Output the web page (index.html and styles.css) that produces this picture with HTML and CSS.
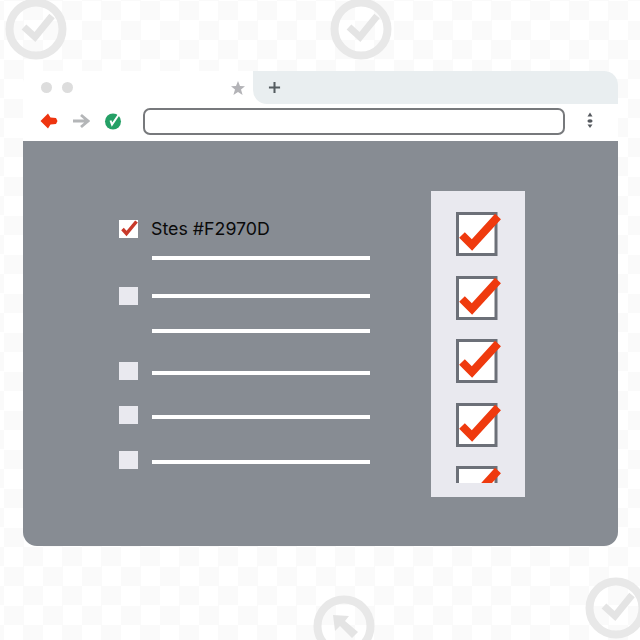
FILE: index.html
```html
<!DOCTYPE html>
<html lang="en">
<head>
<meta charset="utf-8">
<title>Checklist</title>
<link rel="stylesheet" href="styles.css">
</head>
<body>
<div class="page">
  <svg class="mark mark-a" viewBox="0 0 62 62"><circle cx="31" cy="31" r="26.5"/><polyline points="19,29 30,39 47,18"/></svg>
  <svg class="mark mark-b" viewBox="0 0 62 62"><circle cx="31" cy="31" r="26.5"/><polyline points="19,29 30,39 47,18"/></svg>
  <svg class="mark mark-c" viewBox="0 0 62 62"><circle cx="31" cy="31" r="26.5"/><path class="solid" d="M20 20 L36 21 L32 26 L45 37 L39 43 L27 31 L22 36 Z"/></svg>
  <svg class="mark mark-d" viewBox="0 0 62 62"><circle cx="31" cy="31" r="26.5"/><polyline points="19,29 30,39 47,18"/></svg>

  <div class="window">
    <div class="tabbar">
      <div class="tab">
        <span class="dot"></span>
        <span class="dot"></span>
        <svg class="star" viewBox="0 0 16 16"><path d="M8 1 L10 6 L15 6.2 L11 9.5 L12.6 15 L8 12 L3.4 15 L5 9.5 L1 6.2 L6 6 Z"/></svg>
      </div>
      <div class="tabrest">
        <svg class="plus" viewBox="0 0 14 14"><path d="M7 1 V13 M1 7 H13"/></svg>
      </div>
    </div>
    <div class="toolbar">
      <svg class="back" viewBox="0 0 18 16"><path d="M0.5 8 L8 0.5 L10.5 4.5 L16 5 L17.5 8 L16 11 L10.5 11.5 L8 15.5 Z"/></svg>
      <svg class="forward" viewBox="0 0 18 16"><path d="M1 8 H15 M9 2 L16 8 L9 14"/></svg>
      <svg class="site" viewBox="0 0 18 18"><circle cx="9" cy="9.5" r="8"/><path class="tick" d="M6.5 8.5 L8 12.5 L15.5 1.5"/></svg>
      <div class="address"></div>
      <svg class="kebab" viewBox="0 0 6 18"><path d="M3 0.5 L5.5 4.5 H0.5 Z"/><ellipse cx="3" cy="9" rx="2.6" ry="1.8"/><path d="M3 16 L5.5 12.5 H0.5 Z"/></svg>
    </div>
    <div class="content">
      <div class="list">
        <div class="row">
          <svg class="mini" viewBox="0 0 19 18"><rect width="19" height="18" class="mini-bg"/><polyline points="3.5,9 7.5,13.5 17.5,1.5"/></svg>
          <span class="label">Stes #F2970D</span>
        </div>
        <div class="line gap-18"></div>
        <div class="row gap-27"><span class="box"></span><span class="line"></span></div>
        <div class="line gap-24"></div>
        <div class="row row-low gap-29"><span class="box"></span><span class="line"></span></div>
        <div class="row row-low gap-26"><span class="box"></span><span class="line"></span></div>
        <div class="row row-low gap-27"><span class="box"></span><span class="line"></span></div>
      </div>
      <div class="panel">
        <svg class="check" viewBox="0 0 46 44"><rect x="1.5" y="1.5" width="38.5" height="41"/><polyline points="6,23 16,33 42,4.5"/></svg>
        <svg class="check" viewBox="0 0 46 44"><rect x="1.5" y="1.5" width="38.5" height="41"/><polyline points="6,23 16,33 42,4.5"/></svg>
        <svg class="check" viewBox="0 0 46 44"><rect x="1.5" y="1.5" width="38.5" height="41"/><polyline points="6,23 16,33 42,4.5"/></svg>
        <svg class="check" viewBox="0 0 46 44"><rect x="1.5" y="1.5" width="38.5" height="41"/><polyline points="6,23 16,33 42,4.5"/></svg>
        <div class="clipped">
          <svg class="check" viewBox="0 0 46 44"><rect x="1.5" y="1.5" width="38.5" height="41"/><polyline points="6,23 16,33 42,4.5"/></svg>
        </div>
      </div>
    </div>
  </div>
</div>
</body>
</html>
```

FILE: styles.css
```css
* { box-sizing: border-box; }
html, body { margin: 0; padding: 0; }
body { font-family: "Inter", "Liberation Sans", sans-serif; }

.page {
  position: relative;
  width: 640px;
  height: 640px;
  overflow: hidden;
  padding: 71px 22px 0 23px;
  background-color: #fff;
  background-image: conic-gradient(#fafafa 25%, #fff 0 50%, #fafafa 0 75%, #fff 0);
  background-size: 39px 39px;
  background-position: 4px 1px;
}

.mark { position: absolute; width: 62px; height: 62px; }
.mark circle { fill: none; stroke: #e8e8e8; stroke-width: 8; }
.mark polyline { fill: none; stroke: #e4e4e4; stroke-width: 7; }
.mark .solid { fill: #e4e4e4; }
.mark-a { left: 5px; top: -2px; }
.mark-b { left: 330px; top: -2px; }
.mark-c { left: 313px; top: 595px; }
.mark-d { left: 585px; top: 577px; }

.window {
  position: relative;
  width: 595px;
  height: 475px;
  border-radius: 14px;
  overflow: hidden;
  background: #fff;
  display: flex;
  flex-direction: column;
}

.tabbar { display: flex; height: 33px; flex: none; background: #fff; }
.tab {
  width: 230px;
  display: flex;
  align-items: center;
  padding-left: 18px;
  gap: 10px;
}
.dot { width: 11px; height: 11px; border-radius: 50%; background: #dddddd; }
.star { width: 16px; height: 16px; fill: #b3b3b7; margin-left: 147px; }
.tabrest {
  flex: 1;
  background: #e9eef0;
  border-bottom-left-radius: 14px;
  display: flex;
  align-items: center;
  padding-left: 15px;
}
.plus { width: 13px; height: 13px; fill: none; stroke: #555c60; stroke-width: 2.2; }

.toolbar {
  height: 37px;
  flex: none;
  display: flex;
  align-items: center;
  padding: 0 0 3px 17px;
  background: #fff;
}
.back { width: 18px; height: 16px; fill: #ee3510; }
.forward { width: 18px; height: 16px; margin-left: 14px; fill: none; stroke: #b4b6b8; stroke-width: 2.8; }
.site { width: 18px; height: 18px; margin-left: 14px; overflow: visible; }
.site circle { fill: #25a066; }
.site .tick { fill: none; stroke: #fff; stroke-width: 2; }
.address {
  width: 422px;
  height: 27px;
  margin-left: 21px;
  border: 2px solid #77797c;
  border-radius: 7px;
  background: #fff;
}
.kebab { width: 6px; height: 18px; margin-left: 22px; fill: #55595e; }

.content {
  flex: 1;
  background: #878c93;
  display: flex;
  justify-content: space-between;
  align-items: flex-start;
  padding: 50px 93px 0 96px;
}

.list { width: 251px; padding-top: 29px; display: flex; flex-direction: column; }
.row { display: flex; align-items: center; height: 18px; gap: 14px; }
.box { width: 19px; height: 18px; background: #e9e9ef; flex: none; }
.mini { width: 19px; height: 18px; flex: none; overflow: visible; }
.mini-bg { fill: #fff; }
.mini polyline { fill: none; stroke: #c8392a; stroke-width: 3.5; }
.label { font-size: 17.8px; line-height: 20px; color: #0a0a0a; margin-left: -1px; }
.line { display: block; height: 4px; width: 218px; background: #fff; flex: none; }
.list > .line { margin-left: 33px; }
.row-low .line { margin-top: 3px; }
.gap-18 { margin-top: 18px; }
.gap-24 { margin-top: 24px; }
.gap-26 { margin-top: 26px; }
.gap-27 { margin-top: 27px; }
.gap-29 { margin-top: 29px; }

.panel {
  width: 94px;
  height: 306px;
  background: #e9e9ef;
  padding: 21px 0 0 25px;
  display: flex;
  flex-direction: column;
  gap: 19.5px;
}
.check { display: block; width: 46px; height: 44px; flex: none; }
.check rect { fill: #fff; stroke: #6c7078; stroke-width: 3; }
.check polyline { fill: none; stroke: #ef3a0e; stroke-width: 8; }
.clipped { height: 17px; overflow: hidden; flex: none; }
```
